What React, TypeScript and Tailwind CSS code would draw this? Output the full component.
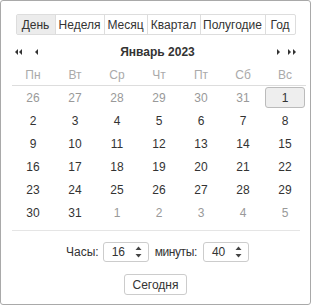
import React from 'react';

const tabs = [
  { label: 'День', w: 'w-[38px]', active: true },
  { label: 'Неделя', w: 'w-[49px]' },
  { label: 'Месяц', w: 'w-[43px]' },
  { label: 'Квартал', w: 'w-[53px]' },
  { label: 'Полугодие', w: 'w-[65px]' },
  { label: 'Год', w: 'w-[30px]' },
];

const weekdays = ['Пн', 'Вт', 'Ср', 'Чт', 'Пт', 'Сб', 'Вс'];

type Day = { n: number; muted?: boolean; selected?: boolean };

function buildDays(): Day[] {
  const days: Day[] = [];
  for (let n = 26; n <= 31; n++) days.push({ n, muted: true });
  for (let n = 1; n <= 31; n++) days.push({ n, selected: n === 1 });
  for (let n = 1; n <= 5; n++) days.push({ n, muted: true });
  return days;
}

function Tri({ dir }: { dir: 'left' | 'right' }) {
  return (
    <svg width="3" height="6" viewBox="0 0 3 6" className="fill-[#333]">
      {dir === 'left' ? <path d="M3 0 L0 3 L3 6 Z" /> : <path d="M0 0 L3 3 L0 6 Z" />}
    </svg>
  );
}

function Spinner() {
  return (
    <svg width="7" height="14" viewBox="0 0 7 14" className="fill-[#444]">
      <path d="M0.5 5 L3.5 1.5 L6.5 5 Z" />
      <path d="M0.5 9 L3.5 12.5 L6.5 9 Z" />
    </svg>
  );
}

function TimeInput({ value }: { value: string }) {
  return (
    <div className="flex items-center justify-between w-[46px] h-[20px] border border-[#ccc] rounded-[3px] pl-[8px] pr-[6px]">
      <span>{value}</span>
      <Spinner />
    </div>
  );
}

export default function App() {
  const days = buildDays();
  return (
    <div
      className="w-[311px] h-[305px] border border-[#a9a9a9] rounded-[3px] bg-white text-[12px] text-[#333] flex flex-col items-center"
      style={{ fontFamily: '"Liberation Sans", Arial, sans-serif' }}
    >
      <div className="mt-[13px] flex border border-[#ddd] rounded-[2px] h-[21px]">
        {tabs.map((t, i) => (
          <div
            key={t.label}
            className={`${t.w} flex items-center justify-center ${i > 0 ? 'border-l border-[#ddd]' : ''} ${t.active ? 'bg-[#ececec]' : ''}`}
          >
            {t.label}
          </div>
        ))}
      </div>

      <div className="w-full mt-[8px] h-[18px] flex items-center px-[14px]">
        <div className="flex items-center gap-[1px] w-[7px]">
          <Tri dir="left" />
          <Tri dir="left" />
        </div>
        <div className="ml-[13px]">
          <Tri dir="left" />
        </div>
        <div className="flex-1 text-center font-bold">Январь 2023</div>
        <div className="mr-[8px]">
          <Tri dir="right" />
        </div>
        <div className="flex items-center gap-[2px]">
          <Tri dir="right" />
          <Tri dir="right" />
        </div>
      </div>

      <div className="w-[294px] self-start ml-[11px] mt-[3px]">
        <div className="grid grid-cols-7 h-[22px] border-b border-[#ddd] items-center text-[#aaa]">
          {weekdays.map((d) => (
            <div key={d} className="text-center">{d}</div>
          ))}
        </div>
        <div className="grid grid-cols-7">
          {days.map((d, i) => (
            <div key={i} className="h-[23px] flex items-center justify-center">
              {d.selected ? (
                <div className="w-[40px] h-[21px] flex items-center justify-center bg-[#eee] border border-[#bbb] rounded-[3px]">
                  {d.n}
                </div>
              ) : (
                <span className={d.muted ? 'text-[#999]' : ''}>{d.n}</span>
              )}
            </div>
          ))}
        </div>
      </div>

      <div className="w-[288px] self-start ml-[11px] mt-[6px] border-t border-[#e5e5e5]" />

      <div className="mt-[11px] flex items-center self-start ml-[65px]">
        <span className="mr-[4px]">Часы:</span>
        <TimeInput value="16" />
        <span className="ml-[6px] mr-[6px] tracking-[-0.4px]">минуты:</span>
        <TimeInput value="40" />
      </div>

      <div className="mt-[12px] w-[63px] h-[21px] border border-[#ccc] rounded-[3px] flex items-center justify-center">
        Сегодня
      </div>
    </div>
  );
}
